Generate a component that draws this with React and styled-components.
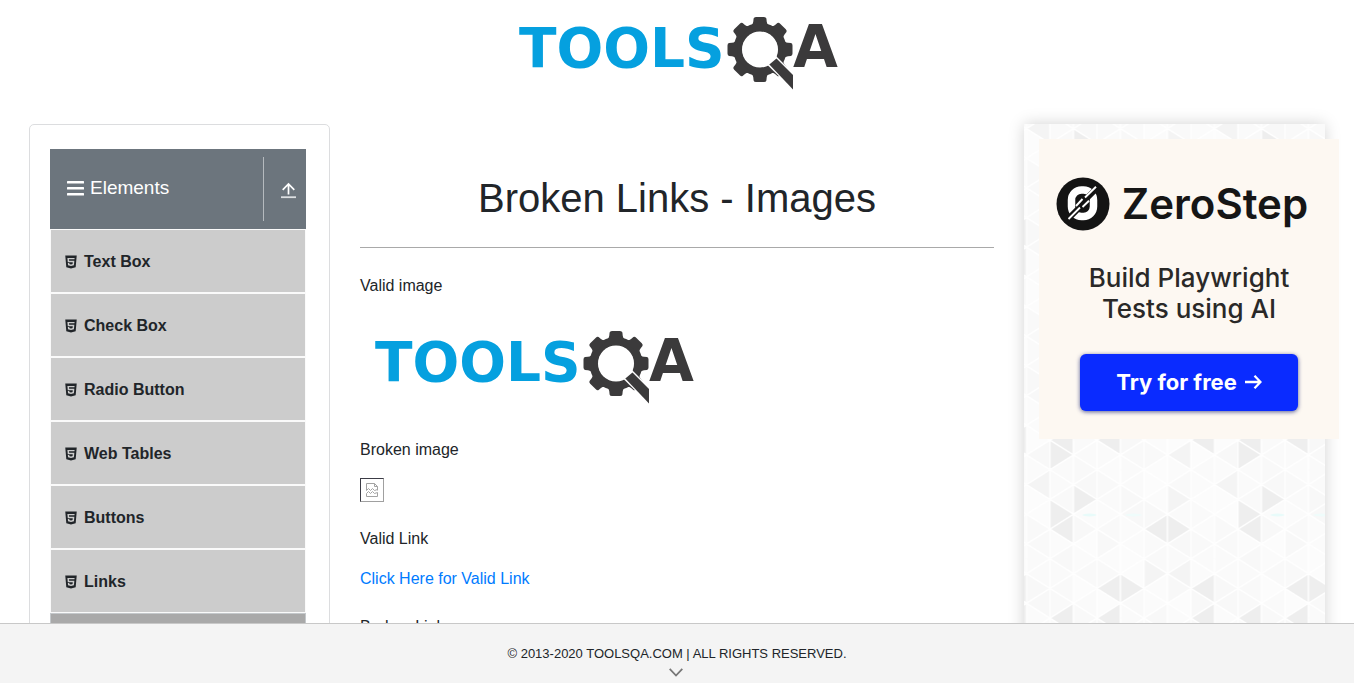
import React from "react";
import styled, { createGlobalStyle } from "styled-components";
import { AiFillHtml5 } from "react-icons/ai";

const GlobalStyle = createGlobalStyle`
  *, *::before, *::after { box-sizing: border-box; }
  body {
    margin: 0;
    background: #fff;
    color: #212529;
    font-family: "Liberation Sans", Arial, sans-serif;
    font-size: 16px;
    line-height: 24px;
  }
  svg { display: block; flex: none; }
`;

const Page = styled.div`
  display: flex;
  flex-direction: column;
  height: 100vh;
  padding-right: 12px;
  overflow: hidden;
`;

const Content = styled.div`
  flex: 1;
  min-height: 0;
  overflow: hidden;
`;

const Header = styled.header`
  display: flex;
  justify-content: center;
  padding-bottom: 24px;
`;

const Columns = styled.div`
  display: grid;
  grid-template-columns: minmax(0, 301fr) minmax(0, 634fr) minmax(0, 301fr);
  gap: 30px;
  padding: 0 29px;
`;

const SidePanel = styled.aside`
  padding: 24px 23px 24px 20px;
  border: 1px solid #dcdddf;
  border-radius: 5px;
`;

const GroupHeader = styled.button`
  display: flex;
  align-items: center;
  width: 100%;
  height: 80px;
  padding: 0 10px 0 17px;
  border: 0;
  background: #6c757d;
  color: #fff;
  font: inherit;
  font-size: 19px;
  text-align: left;
`;

const GroupTitle = styled.span`
  flex: 1;
  padding: 0 0 2px 6px;
`;

const GroupToggle = styled.span`
  display: flex;
  align-items: center;
  height: 64px;
  padding: 2px 0 0 17px;
  border-left: 1px solid #b5babe;
`;

const Menu = styled.ul`
  margin: 0;
  padding: 0;
  list-style: none;
`;

const MenuLink = styled.a`
  display: flex;
  align-items: center;
  gap: 5px;
  height: 64px;
  padding: 2px 0 0 12px;
  border: 1px solid ${(p) => (p.$active ? "#c4c8cb" : "#fafafa")};
  background: ${(p) => (p.$active ? "#a9a9a9" : "#ccc")};
  color: #212529;
  font-weight: 700;
  text-decoration: none;
`;

const Title = styled.h1`
  margin: 50px 0 25px;
  font-size: 40px;
  font-weight: 400;
  line-height: 48px;
  text-align: center;
`;

const Rule = styled.hr`
  margin: 0 0 26px;
  border: 0;
  border-top: 1px solid #a9a9a9;
`;

const Example = styled.section`
  margin-bottom: 24px;
`;

const Label = styled.p`
  margin: 0 0 16px;
`;

const TextLink = styled.a`
  color: #007bff;
  text-decoration: none;
`;

const BrokenFrame = styled.div`
  display: flex;
  align-items: center;
  justify-content: center;
  width: 24px;
  height: 24px;
  margin-bottom: 25px;
  border: 1px solid;
  border-color: #3c3c46 #a0a0a0 #a0a0a0 #3c3c46;
`;

const AdColumn = styled.aside`
  position: relative;
  padding: 15px;
  box-shadow: 0 0 15px #d3d3d3;
`;

const PatternSvg = styled.svg`
  position: absolute;
  inset: 0;
  width: 100%;
  height: 100%;
`;

const Ad = styled.div`
  position: relative;
  display: flex;
  flex-direction: column;
  align-items: center;
  width: 300px;
  height: 300px;
  padding-top: 38px;
  background: #fdf8f2;
  color: #161616;
  font-family: Inter, sans-serif;
`;

const AdBrand = styled.div`
  display: flex;
  align-items: center;
  gap: 12px;
  height: 54px;
  margin-right: 14px;
  font-size: 42px;
  font-weight: 600;
`;

const AdText = styled.p`
  margin: 31px 0 30px;
  font-size: 26px;
  font-weight: 500;
  line-height: 31px;
  text-align: center;
  color: #2a2928;
`;

const AdButton = styled.button`
  display: flex;
  align-items: center;
  justify-content: center;
  gap: 8px;
  width: 218px;
  height: 57px;
  padding: 0 0 2px;
  border: 0;
  border-radius: 6px;
  background: #0a2bff;
  box-shadow: 0 1px 4px rgba(20, 30, 110, 0.7);
  color: #fff;
  font-family: inherit;
  font-size: 22px;
  font-weight: 700;
`;

const Footer = styled.footer`
  display: flex;
  flex-direction: column;
  align-items: center;
  height: 60px;
  padding-top: 18px;
  border-top: 1px solid #c8c8c8;
  background: #f4f4f4;
  font-size: 13px;
`;

const FooterArrow = styled.svg`
  margin: 2px 3px 0 0;
`;

const range = (n) => Array.from({ length: n }, (_, i) => i);

const Tooth = ({ angle }) => (
  <path
    transform={`rotate(${angle} 256 32.5)`}
    d="M244.500 10 Q249 8 249.300 4.500 L249.600 1.500 Q250 0 252 0 H260 Q262 0 262.400 1.500 L262.700 4.500 Q263 8 267.500 10 Z"
  />
);

function ToolsLogo() {
  return (
    <svg width="346" height="100" viewBox="0 -17 346 100" role="img" aria-label="ToolsQA">
      <text x="15" y="50" fontFamily="DejaVu Sans, sans-serif" fontWeight="700" fontSize="55" fill="#05a0df">
        TOOLS
      </text>
      <g fill="#3b3a3b">
        <circle cx="256" cy="32.500" r="22" fill="none" stroke="#3b3a3b" strokeWidth="9" />
        {range(8).map((i) => (
          <Tooth key={i} angle={i * 45} />
        ))}
        <circle cx="256" cy="32.500" r="18" fill="#fff" />
        <path d="M263 47.500 L271.500 38.500 L300 67 V84 Z" fill="#fff" />
        <path d="M265.300 47.500 L272.500 41.500 L289 58 V72.500 Z" />
        <text x="289" y="50" fontFamily="DejaVu Sans, sans-serif" fontWeight="700" fontSize="58">
          A
        </text>
      </g>
    </svg>
  );
}

const BarsIcon = () => (
  <svg width="17" height="16" viewBox="0 0 17 16" fill="#fff" aria-hidden="true">
    <rect y="0" width="17" height="2.600" rx="0.500" />
    <rect y="6" width="17" height="2.600" rx="0.500" />
    <rect y="12" width="17" height="2.600" rx="0.500" />
  </svg>
);

const UploadIcon = () => (
  <svg width="15" height="17" viewBox="0 0 15 17" fill="none" stroke="#fff" aria-hidden="true">
    <path d="M7.500 12.500 V2 M1.700 7.800 L7.500 2 L13.300 7.800" strokeWidth="1.700" />
    <path d="M0 15.200 H15" stroke="#dcdfe1" strokeWidth="1.800" />
  </svg>
);

const BrokenIcon = () => (
  <svg width="14" height="16" viewBox="0 0 14 16" fill="none" stroke="#a3a3a3" aria-hidden="true">
    <path d="M1.500 8.500 V1.500 H9.500 L12.500 4.500 V8.500 M9.500 1.500 V4.500 H12.500" />
    <path d="M1.500 8.500 L3.500 6.500 L5.500 8.500 L7.500 6.500 L9.500 8.500 L12.500 7.500" />
    <path d="M1.500 14.500 V11.500 L3.500 9.500 L5.500 11.500 L7.500 9.500 L9.500 11.500 L12.500 10.500 V14.500 Z" />
  </svg>
);

const ZeroStepMark = () => (
  <svg width="54" height="54" viewBox="0 0 54 54" aria-hidden="true">
    <circle cx="27" cy="27" r="26.500" fill="#141414" />
    <rect x="15.500" y="13" width="22" height="26.500" rx="10" fill="none" stroke="#fff" strokeWidth="7.500" />
    <path d="M11 43 L26 28 M27 25 L42 10" stroke="#141414" strokeWidth="6" />
    <path d="M12.500 42 L24 30.500 M20 29 L26.500 22 M26.500 30 L33 23.700 M29 20.500 L40 9.700" stroke="#fff" strokeWidth="1.900" />
  </svg>
);

const ArrowRight = () => (
  <svg width="17" height="16" viewBox="0 0 17 16" fill="none" stroke="#fff" strokeWidth="2.300" aria-hidden="true">
    <path d="M0 8 H15 M9.500 1.700 L15.500 8 L9.500 14.300" />
  </svg>
);

const CELL = 23.5;
const STEP = 356 / 24;

// Darker triangles of one tile: "column:row:direction" of the apex.
const DARK = new Set([
  "1:0:R", "1:23:L", "1:4:R", "1:5:L", "1:11:L", "2:3:R", "3:23:L", "3:9:L",
  "3:11:L", "4:9:R", "5:5:L", "6:5:R", "7:23:L", "7:9:L", "7:11:L",
]);
const MID = new Set(["5:8:R", "6:0:L", "6:3:R", "6:8:L", "0:2:L"]);
const PALE = ["#fbfbfb", "#f8f8f8", "#fafafa", "#f9f9f9", "#fcfcfc"];

const shadeOf = (col, row, dir) => {
  const id = `${col}:${row}:${dir}`;
  if (DARK.has(id)) return "#eeeeee";
  if (MID.has(id)) return "#f4f4f4";
  return PALE[(col * 3 + row * 7 + (dir === "L" ? 1 : 3) + ((col * row) % 4)) % PALE.length];
};

function triangles() {
  const out = [];
  for (let col = 0; col < 8; col++) {
    for (let r = -1; r <= 25; r++) {
      const dir = Math.abs(r) % 2 === col % 2 ? "L" : "R";
      const left = col * CELL;
      const right = left + CELL;
      const apex = dir === "L" ? left : right;
      const base = dir === "L" ? right : left;
      const y = r * STEP;
      out.push(
        <polygon
          key={`${col}:${r}`}
          points={`${apex},${y} ${base},${y - STEP} ${base},${y + STEP}`}
          fill={shadeOf(col, (r + 24) % 24, dir)}
        />
      );
    }
  }
  return out;
}

const TrianglePattern = () => (
  <PatternSvg aria-hidden="true">
    <defs>
      <pattern id="triangles" x="2.500" y="331" width="188" height="356" patternUnits="userSpaceOnUse">
        <g stroke="#fff" strokeWidth="1.200">{triangles()}</g>
        <ellipse cx="63" cy="60" rx="7" ry="1.500" fill="#e8fbfa" />
        <ellipse cx="107" cy="60" rx="8" ry="1.500" fill="#effcfb" />
      </pattern>
    </defs>
    <rect width="100%" height="100%" fill="url(#triangles)" />
  </PatternSvg>
);

const ITEMS = [
  "Text Box",
  "Check Box",
  "Radio Button",
  "Web Tables",
  "Buttons",
  "Links",
  "Broken Links - Images",
];

export default function App() {
  return (
    <Page>
      <GlobalStyle />
      <Content>
        <Header>
          <a href="#home">
            <ToolsLogo />
          </a>
        </Header>
        <Columns>
          <SidePanel>
            <GroupHeader type="button">
              <BarsIcon />
              <GroupTitle>Elements</GroupTitle>
              <GroupToggle>
                <UploadIcon />
              </GroupToggle>
            </GroupHeader>
            <Menu>
              {ITEMS.map((item, i) => (
                <li key={item}>
                  <MenuLink href="#item" $active={i === ITEMS.length - 1}>
                    <AiFillHtml5 aria-hidden="true" />
                    {item}
                  </MenuLink>
                </li>
              ))}
            </Menu>
          </SidePanel>
          <main>
            <Title>Broken Links - Images</Title>
            <Rule />
            <Example>
              <Label>Valid image</Label>
              <ToolsLogo />
            </Example>
            <Example>
              <Label>Broken image</Label>
              <BrokenFrame role="img" aria-label="Broken image">
                <BrokenIcon />
              </BrokenFrame>
            </Example>
            <Example>
              <Label>Valid Link</Label>
              <TextLink href="#valid">Click Here for Valid Link</TextLink>
            </Example>
            <Example>
              <Label>Broken Link</Label>
              <TextLink href="#broken">Click Here for Broken Link</TextLink>
            </Example>
          </main>
          <AdColumn>
            <TrianglePattern />
            <Ad>
              <AdBrand>
                <ZeroStepMark />
                ZeroStep
              </AdBrand>
              <AdText>
                Build Playwright
                <br />
                Tests using AI
              </AdText>
              <AdButton type="button">
                Try for free
                <ArrowRight />
              </AdButton>
            </Ad>
          </AdColumn>
        </Columns>
      </Content>
      <Footer>
        <span>© 2013-2020 TOOLSQA.COM | ALL RIGHTS RESERVED.</span>
        <FooterArrow width="14" height="9" viewBox="0 0 14 9" fill="none" stroke="#777" strokeWidth="1.800" aria-hidden="true">
          <path d="M0.700 0.800 L7 7.500 L13.300 0.800" />
        </FooterArrow>
      </Footer>
    </Page>
  );
}
